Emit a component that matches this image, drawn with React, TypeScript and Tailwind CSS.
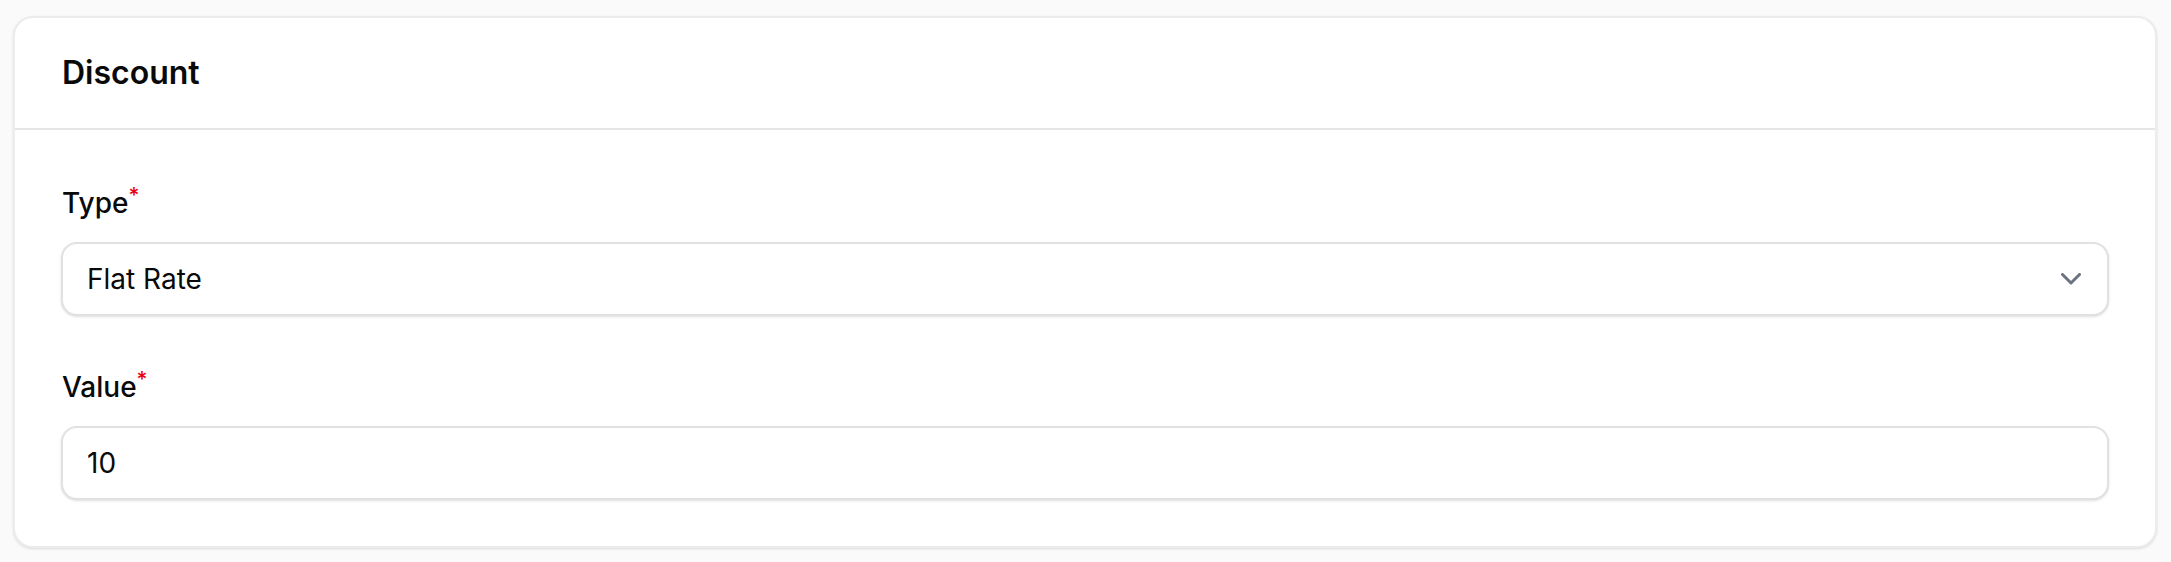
import React from "react";

function Label({ text }: { text: string }) {
  return (
    <div className="pl-[1px] text-[28px] leading-[40px] font-medium text-[#0a0a0a]">
      {text}
      <sup className="text-red-600 font-medium">*</sup>
    </div>
  );
}

export default function App() {
  return (
    <div
      className="min-h-screen bg-[#fafafa] pt-[16px] pl-[13px] pr-[14px]"
      style={{ fontFamily: "Inter, 'Noto Sans', sans-serif" }}
    >
      <div className="rounded-[20px] border-2 border-[#ececec] bg-white shadow-sm">
        <div className="border-b-2 border-[#e6e6e6] pl-[47px] pr-[48px] py-[31px]">
          <h2 className="text-[32px] leading-[48px] font-semibold text-[#0a0a0a]">Discount</h2>
        </div>
        <div className="px-[46px] pt-[53px] pb-[46px] flex flex-col">
          <Label text="Type" />
          <div className="mt-[19px] flex h-[74px] items-center justify-between rounded-[16px] border-2 border-[#e1e1e1] bg-white pl-[24px] pr-[26px] shadow-sm">
            <span className="text-[28px] leading-[40px] text-[#0a0a0a]">Flat Rate</span>
            <svg width="20" height="12" viewBox="0 0 20 12" fill="none">
              <polyline
                points="1.5,1.5 10,10 18.5,1.5"
                stroke="#6b7280"
                strokeWidth="3"
                strokeLinecap="round"
                strokeLinejoin="round"
              />
            </svg>
          </div>
          <div className="mt-[51px]">
            <Label text="Value" />
          </div>
          <div className="mt-[19px] flex h-[74px] items-center rounded-[16px] border-2 border-[#e1e1e1] bg-white pl-[24px] pr-[26px] shadow-sm">
            <span className="text-[28px] leading-[40px] text-[#0a0a0a]">10</span>
          </div>
        </div>
      </div>
    </div>
  );
}
